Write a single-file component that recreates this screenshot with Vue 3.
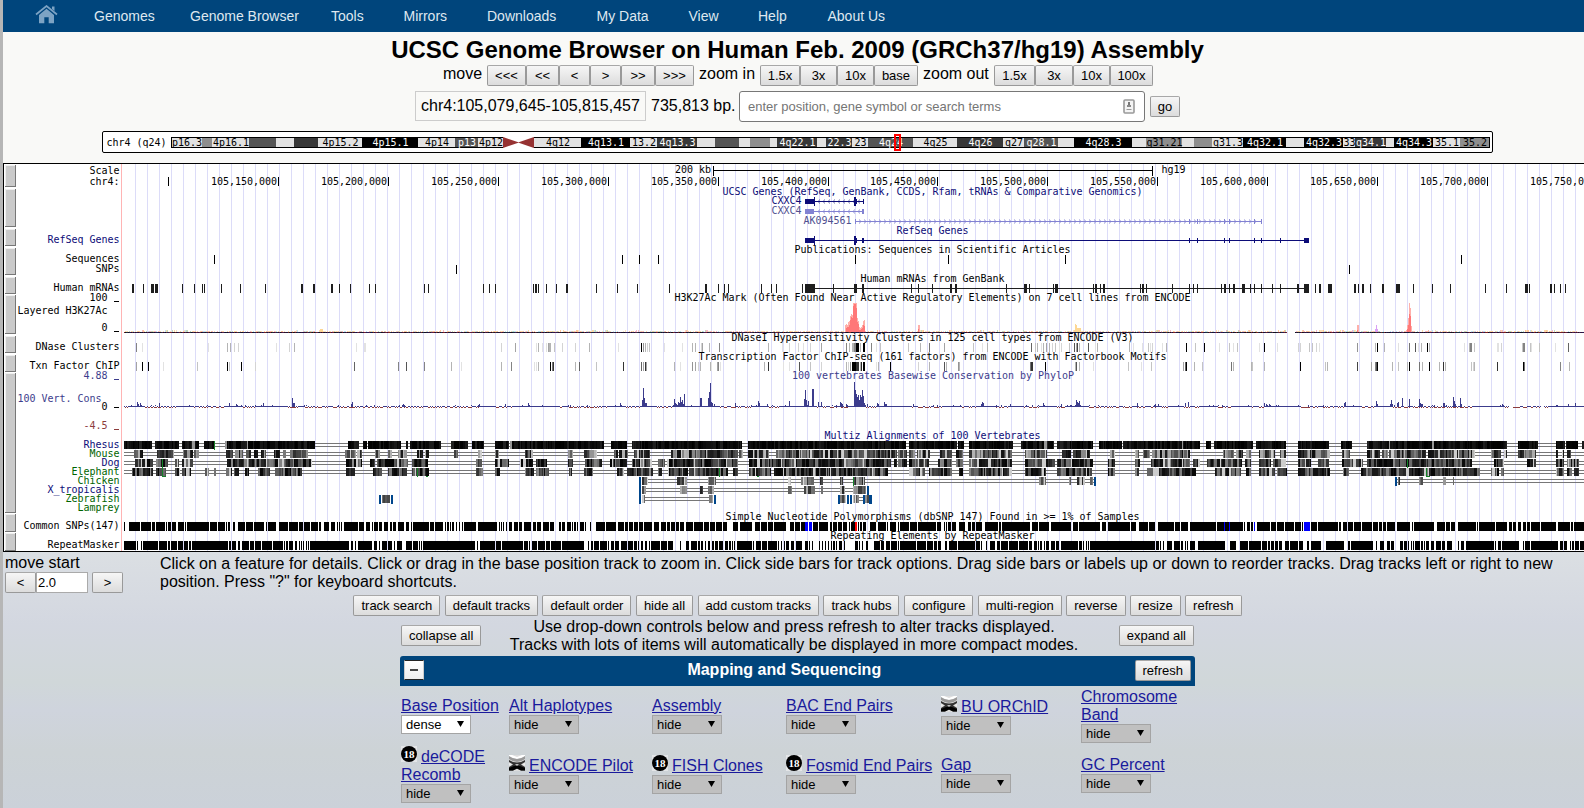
<script setup>
const nav = [
  ['Genomes', 94], ['Genome Browser', 190], ['Tools', 331], ['Mirrors', 403.5], ['Downloads', 487],
  ['My Data', 596.5], ['View', 688.5], ['Help', 758], ['About Us', 827.5],
]
const moveBtns = [['<<<', 39], ['<<', 33], ['<', 31], ['>', 31], ['>>', 34], ['>>>', 39]]
const zoomIn = [['1.5x', 40], ['3x', 37], ['10x', 37], ['base', 44]]
const zoomOut = [['1.5x', 41], ['3x', 38], ['10x', 37], ['100x', 43]]
const actions = ['track search', 'default tracks', 'default order', 'hide all', 'add custom tracks', 'track hubs', 'configure', 'multi-region', 'reverse', 'resize', 'refresh']
const controls = [
  { name: 'Base Position', mode: 'dense' }, { name: 'Alt Haplotypes' }, { name: 'Assembly' },
  { name: 'BAC End Pairs' }, { name: 'BU ORChID', icon: 'helix' }, { name: 'Chromosome Band' },
  { name: 'deCODE Recomb', icon: '18' }, { name: 'ENCODE Pilot', icon: 'helix' }, { name: 'FISH Clones', icon: '18' },
  { name: 'Fosmid End Pairs', icon: '18' }, { name: 'Gap' }, { name: 'GC Percent' },
]

/* chromosome bands: start x, shade, label */
const L = '#e2e2e2', G = '#8e8e8e', D = '#555', K = '#383838', B = '#000'
const bandData = [
  [171, L, 'p16.3'], [202, G], [212, L, '4p16.1'], [249, D], [276, L], [294, K], [318, L, '4p15.2'], [362, B, '4p15.1'],
  [418, L, '4p14'], [455, D, 'p13'], [478, L, '4p12'], [503, '#fff'], [534, L, '4q12'], [581, B, '4q13.1'], [630, L, '13.2'],
  [657, K, '4q13.3'], [697, L], [715, D], [739, L], [750, G], [770, L], [777, K, '4q22.1'], [817, L], [826, K, '22.3'],
  [852, L, '23'], [868, D, '4q24'], [913, L, '4q25'], [957, K, '4q26'], [1003, L, 'q27'], [1024, D, 'q28.1'], [1058, L],
  [1074, B, '4q28.3'], [1132, L], [1146, G, 'q31.21'], [1182, L], [1194, G], [1212, L, 'q31.3'], [1243, B, '4q32.1'],
  [1286, L], [1304, B, '4q32.3'], [1343, L, '33'], [1355, K, 'q34.1'], [1386, L], [1394, B, '4q34.3'], [1433, L, '35.1'],
  [1460, G, '35.2'], [1489, L],
]
const bands = bandData.slice(0, -1).map((b, i) => ({
  x: b[0], w: bandData[i + 1][0] - b[0], fill: b[1], t: b[2], ink: b[1] === L || b[1] === G ? '#000' : '#fff',
}))

/* Track data: four horizontal panels, coordinates in thirds of a pixel */
const OFF = [0, 400, 800, 1184]
const items = (panels) => panels.flatMap((s, i) => s.trim().split(/\s+/).filter(Boolean).map((tok) => {
  const [pos, shade] = tok.split('/')
  const [a, b] = pos.split('-').map(Number)
  const x = OFF[i] + Math.floor(a / 3 + 0.01)
  const e = b === undefined ? x + 1 : OFF[i] + Math.round(b / 3)
  const v = shade === undefined ? 0 : parseInt(shade, 16) * 16 + (shade === 'e' ? 2 : 4)
  return { x, w: Math.max(1, e - x), fill: shade === '0' || shade === undefined ? '#000' : `rgb(${v},${v},${v})` }
}))
const toPath = (list, y, h) => list.map((r) => `M${r.x} ${y}h${r.w}v${h}h${-r.w}z`).join('')
const bars = (panels, y, h) => toPath(items(panels), y, h)

const mrna = bars([
  '396-402 429 453-462 465-474 546 582 606 613 663 720 796 903-909 939-945 993-999 1018 1050 1108 1126',
  '73 85 250 268 286 400 405-411 415 439 469 498-504 589 652 712 808 915-921 955 973 985 1084 1114 1129',
  '7 15-45 100 162-171 186-192 334 354 397 450-456 465-471 619 672-681 688 759 765-774 879 885-891 900 909-915 1020 1026-1032 1038 1117',
  '16 28 40 111 120-126 136 147-153 174-183 199 210 232 265 289 339-345 360-375 394 405-411 432-444 510-516 523 534-540 559 594-600 636-648 688 745 799 904 967 1023-1032 1036 1098-1104 1111 1129 1144',
], 284, 9)
const pubSeq = bars(['643', '667 718 775', '166 445 796', '832'], 255, 9)
const pubSnp = bars(['', '169', '', '496'], 265, 9)

const dnase = items([
  '409/8 427/e 625/e 682/b 691/b 703/d 715/d 829/e 868/d 883/b 1069/e 1092-1098/e',
  '304/d 346/a 409/e 415/b 427/e 439/e 444/a 447-453/b 463/c 487/d 526/d 568/b 655/e 723/0 730/9 736/b 742/d 748/c 793/e 847/e 877/b 886/b 904/d 907/a 928/b 958/8 1105/b 1147/e 1168/d 1195/d',
  '10/e 31/d 65/a 139/8 148/b 157-162/b 163-168/8 169-177/0 181/b 189-195/0 214/8 228/e 240/c 325/c 361/b 388/7 433/a 520/c 547/e 562/b 694/6 706/c 712/b 724/e 730/b 739/a 748/b 757/d 766/c 778/e 784/d 808/c 822/5 828/a 831/4 838/b 865/5 886/e 892/b 988/b 1000/e 1027/e 1045/c 1051/e 1057/d 1087/e 1099/b 1159/0 1186/d',
  '34/c 61/0 106/e 136/c 148/e 160/c 226/e 241/0 280/e 343/d 349/d 376/c 385/c 397/d 406/e 520/9 574/b 580/0 601/b 643/e 676/7 694/5 703/e 712/b 730/0 736/b 841/e 855/b 858-864/8 871/c 939-945/e 952/d 1015/c 1018-1023/8 1038/c 1041/e 1066/c 1114/e 1153/6',
])
const txn = items([
  '409/a 427/0 445/0 490/e 592/c 682/0 688/c 724/0 766/d 1063/6 1195/8',
  '19/5 73/8 154/b 184/e 304/b 334/8 403/e 409/e 415/b 451/0 457/7 460/3 526/b 538/6 589/c 670/3 724/6 729/a 735/3 739/a 823/b 841/e 877/9 886/a 895/d 900/b 931/b 935/e 951/a 955/8 961/e 1093/b 1105/3 1150/e 1168/e 1198/5',
  '31/c 64/d 139/b 145/d 150/9 156-168/0 169/3 172-176/3 180/b 184/2 190-195/0 229/e 235/b 271/0 355/d 388/b 433/5 439/b 475/9 478/b 691/7 694-699/3 736/0 826/b 829/5 837/b 880/e 985/c 1024/e 1054/c 1150/a 1156/6 1159/0 1183/c',
  '31/b 55/c 142/7 148/b 202/b 205/c 241/b 349/0 424/c 430/b 520/4 562/a 574/8 577/5 580/0 625/b 643/c 670/b 676/0 706/7 715/b 736/0 766/b 778/3 784/b 862/c 868/d 871/b 940/3 1018/0 1021/7 1129/8 1156/b',
])

const rnd = (n) => {
  let h = Math.imul(n ^ 0x9e3779b9, 0x85ebca6b)
  h ^= h >>> 13
  h = Math.imul(h, 0xc2b2ae35)
  h ^= h >>> 16
  return (h >>> 0) / 4294967296
}

/* Conservation wiggle: position/top of each spike */
const spikeSrc = [
  '394/735 412/727 415/733 421/731 424/735 478/731 568/735 688/729 709/732 712/735 766/735 790/729 877/714 880/730 883/731 1054/734 1057/726',
  '7/735 10/733 13/735 235/735 238/733 316/732 385/731 388/735 510/735 563/735 661/731 664/735 727/720 730/684 733/714 736/731 739/729 820/735 823/718 826/730 829/733 832/735 835/726 838/730 841/712 844/727 847/722 850/733 853/703 874/735 901/714 904/714 925/716 928/697 931/669 934/727 937/730 943/733 1006/729 1054/735 1075/723 1078/730 1103/732 1156/735 1168/723',
  '12/718 15/690 18/720 25/724 37/687 40/687 55/726 64/726 109/735 121/726 124/729 127/733 139/732 142/735 163/666 166/690 169/702 172/712 175/706 178/720 181/705 184/711 187/690 190/708 193/730 196/736 202/733 232/729 235/732 253/726 256/732 259/733 340/733 412/735 481/735 544/732 547/726 550/729 589/735 604/735 631/732 730/729 733/735 784/734 825/735 828/720 831/727 834/730 837/724 841/735 1012/730 1063/735 1066/734 1075/732 1135/735 1156/733 1165/726',
  '4/731 13/726 75/735 88/735 115/735 193/735 241/729 247/732 250/735 256/732 259/735 343/735 373/735 418/735 481/730 484/728 508/735 577/723 580/733 619/733 622/720 625/733 631/735 640/731 643/728 655/714 676/717 706/717 709/730 712/733 715/732 751/735 778/730 781/730 787/735 808/711 811/725 814/733 829/714 832/733 955/734 1117/735 1120/735 1153/734 1174/731',
]
const spikes = spikeSrc.flatMap((s, i) => s.split(' ').map((t) => {
  const [p, top] = t.split('/').map(Number)
  const y = 160 + Math.floor(top / 3)
  return `M${OFF[i] + Math.floor(p / 3)} ${y}h1V407h-1z`
})).join('')
const wig = { up: '', down: '' }
for (let x = 124; x < 1584; x++) {
  if ((x > 1508 && x < 1513) || (x > 1540 && x < 1544)) continue
  const calm = rnd((x >> 4) + 7) < 0.45
  if (calm || rnd(x * 3 + 1) > 0.45) wig.up += `M${x} 406h1v1h-1z`
  else wig.down += `M${x} 407h1v1h-1z`
  if (rnd(x * 5 + 11) > 0.97) wig.up += `M${x} 405h1v1h-1z`
}

/* Layered H3K27Ac noise floor */
const tints = ['#fdd9a4', '#fbe3bd', '#ffc69b', '#bfe3f2', '#f5b8c4', '#c3d9b8', '#fbdca8']
const darks = ['#201428', '#3a1030', '#151540', '#54204a', '#14131c', '#7a2020', '#1b3040', '#2a1a50']
const hist = []
for (let x = 124; x < 1584; x++) {
  if (x > 1286 && x < 1295) continue
  hist.push({ x, y: 332, h: 1, fill: darks[Math.floor(rnd(x * 7) * 8)] })
  if (rnd(x * 13 + 5) < 0.62) {
    const h = rnd((x >> 2) * 31) > 0.85 ? 2 : 1
    hist.push({ x, y: 332 - h, h, fill: tints[Math.floor(rnd(x * 11) * 7)] })
  }
}
/* Signal peaks as [x, top] columns */
const cols = (list) => list.map(([x, y]) => `M${x} ${y}h1V332h-1z`).join('')
const peakLight = cols([[845, 325], [846, 324], [847, 325], [848, 322], [849, 321], [850, 316], [851, 314], [852, 315], [853, 303], [854, 303], [855, 303], [856, 303], [857, 318], [858, 321], [859, 327], [860, 328], [861, 327], [862, 325], [863, 321], [864, 320], [865, 331], [918, 325], [919, 325], [1357, 325], [1358, 325], [1408, 318], [1409, 303], [1410, 308], [1411, 326], [1407, 325], [1406, 330], [1426, 331], [1428, 330], [1430, 331]])
const peakDeep = cols([[846, 328], [847, 327], [848, 327], [849, 325], [850, 320], [851, 317], [852, 318], [853, 306], [854, 304], [855, 304], [856, 308], [857, 322], [858, 324], [859, 330], [860, 330], [861, 329], [862, 328], [863, 325], [864, 326], [918, 329], [1357, 330], [1408, 325], [1409, 314], [1410, 316], [1407, 329]])

/* Multiz alignments */
const alnSrc = [
  { y: 441, lo: 0, hi: 36, p: ['372-456 465-537 546-597 612-642 675-945 1044-1077 1089-1101 1104-1200', '0-4 18-24 30-123 153-204 216-252 285-327 330-612 633-681 696-1026 1044-1200', '0-318 327-471 474-492 507-639 663-762 771-879 897-966 969-1152', '0-48 66-81 90-207 216-306 342-435 471-504 549-969 1002-1062 1116-1143 1146-1182 1194-1200'] },
  { y: 450, lo: 15, hi: 190, p: ['402-429 471-522 549-579 583-597 678-699 705-729 738-753 762-774 783-798 822-840 850-858 870-924 1035-1068 1071-1086 1125-1140 1164-1176 1194-1200', '0-21 51-69 75-87 162-174 234-246 285-297 375-399 504-519 552-591 642-654 657-684 702-750 813-1014 1017-1029 1044-1108 1128-1200', '0-228 228-291 294-321 327-345 351-390 420-456 468-489 507-636 675-741 786-813 819-870 930-945 1005-1017 1029-1050 1056-1152', '0-18 117-150 156-177 186-201 225-273 288-306 342-438 474-498 549-588 594-612 615-726 732-873 921-951 960-969 1002-1056 1116-1122 1134-1140 1149-1161'] },
  { y: 459, lo: 5, hi: 140, p: ['405-459 468-504 525-537 546-579 681-936 1038-1086 1110-1125 1131-1200', '0-24 36-84 228-246 285-327 360-399 408-441 504-519 555-606 630-681 696-756 774-795 801-1014 1047-1200', '0-273 282-291 294-321 327-387 414-456 468-489 507-636 675-765 771-879 924-945 1005-1020 1053-1152', '0-18 27-48 69-174 183-201 225-261 267-306 342-381 402-435 474-537 549-864 930-960 1029-1056 1116-1140 1149-1185'] },
  { y: 468, lo: 5, hi: 145, p: ['396-459 468-498 525-540 546-573 615-627 642-648 678-696 702-717 735-747 774-810 825-906 1038-1065 1119-1146 1164-1200', '0-21 36-87 228-249 285-300 375-402 408-447 507-516 552-579 651-672 681-759 774-786 804-864 867-984 999-1014 1047-1113 1122-1200', '0-264 327-375 387-456 477-489 507-636 675-738 771-876 924-945 1005-1017 1041-1152', '0-36 93-171 186-201 225-273 279-309 342-438 477-495 531-888 921-945 951-960 1116-1140 1149-1164 1170-1185'] },
  { y: 477, lo: 40, hi: 225, p: ['', '726-744 831-861 925-948 1164-1173', '5-42 60-69 120-129 160-195 717-738 807-813 833-855 870-879', '642-648 705-717 777-787 807-810'] },
  { y: 486, lo: 35, hi: 185, p: ['', '726-738 840-861 900-909 925-942 1164-1176', '12-45 63-69 120-135 159-198', ''] },
  { y: 495, lo: 60, hi: 225, p: ['1146-1170', '726-735 927-939', '120-138 159-177 195-207', ''] },
]
const cells = []
alnSrc.forEach((row, r) => {
  items(row.p).forEach((b) => {
    let x = b.x
    while (x < b.x + b.w) {
      const n = x * 17 + r * 7919
      const w = Math.min(b.x + b.w - x, 1 + Math.floor(rnd(n) * 2.4))
      const k = Math.pow(rnd(n + 3), r === 0 ? 2 : r < 4 ? 1.5 : 1)
      let v = row.lo + (row.hi - row.lo) * k
      if (r > 0 && r < 4 && rnd(n + 8) > 0.94) v = 205
      if (r === 0 && rnd(n + 8) > 0.985) v = 150
      v = Math.round(v)
      cells.push({ x, y: row.y, w, fill: `rgb(${v},${v},${v})` })
      x += w
    }
  })
})
const gapLines = [
  [124, 1584, 441], [124, 1584, 450], [124, 1584, 459], [124, 1584, 468], [642, 1094, 477], [1396, 1584, 477],
  [642, 864, 486], [642, 712, 495], [858, 864, 495],
]
const inserts = [[639, 477, 2, 27], [714, 495, 2, 9], [1094, 477, 2, 9], [867, 486, 2, 9], [379, 495, 2, 9], [391, 495, 2, 9], [838, 495, 2, 9], [847, 495, 2, 9], [850, 495, 2, 9], [863, 495, 2, 9], [869, 495, 3, 9], [1395, 477, 2, 9]]
const greens = [[214, 441, 1, 9], [162, 459, 1, 18], [162, 476, 4, 1], [417, 468, 1, 9], [426, 476, 2, 1], [719, 468, 1, 9], [757, 476, 2, 1], [853, 477, 1, 9], [1407, 459, 1, 9], [1426, 468, 1, 9], [1426, 476, 4, 1]]

const snps = bars([
  '372-375 387-420 423-453 456-465 468-495 498-501 504-514 517-528 534-552 555-558 561-627 630-651 654-675 678-681 684-690 699-705 714-735 738-759 762-792 798-801 804-828 837-864 867-894 897-909 912-930 933-954 957-963 972-987 993-1005 1011-1014 1017-1020 1023-1026 1032-1074 1077-1092 1098-1110 1116-1119 1122-1134 1137-1146 1152-1164 1170-1176 1179-1188 1194-1200',
  '0-12 18-27 33-36 39-87 90-102 105-129 135-138 141-147 150-153 156-162 168-171 177-180 186-189 192-228 234-291 297-300 303-306 309-312 318-321 327-336 342-354 357-366 372-393 399-408 411-423 429-447 450-462 477-483 486-495 501-513 516-519 522-528 531-534 540-552 555-558 570-573 588-615 618-648 654-672 675-684 687-699 702-714 717-729 732-756 762-777 783-798 801-810 813-825 828-837 840-852 858-879 882-909 912-927 930-945 948-966 969-981 999-1014 1020-1056 1065-1080 1083-1101 1104-1119 1122-1158 1170-1182 1185-1200',
  '3-15 39-54 57-84 90-96 99-111 114-126 129-141 147-150 153-165 174-177 180-186 189-198 210-228 234-258 261-264 270-288 294-297 300-327 330-351 354-408 411-423 432-435 438-441 444-453 456-468 477-495 504-513 516-525 528-546 555-594 597-603 606-690 696-714 717-747 753-813 819-834 837-900 906-918 924-990 993-1008 1017-1044 1047-1065 1074-1122 1125-1140 1143-1152',
  '0-12 18-96 99-177 180-183 189-198 201-207 219-258 261-276 279-300 303-330 333-351 354-357 381-399 402-462 465-471 477-489 492-507 510-531 534-564 567-582 585-594 597-606 609-633 639-678 684-687 690-750 759-783 786-798 801-813 822-876 879-882 885-933 936-969 975-984 987-996 1002-1011 1017-1026 1029-1038 1041-1068 1071-1116 1122-1158 1161-1167 1170-1200',
], 522, 9)
const snpBlue = bars(['', '', '15-24 27-36', '120-124 135-138 210-214 360-378'], 522, 9)
const rmsk = bars([
  '372-408 412-415 423-426 429-474 477-501 504-510 513-531 534-549 552-564 567-573 576-684 687-693 696-708 714-720 726-747 750-762 765-783 786-816 819-849 852-855 858-864 867-879 885-891 897-900 903-906 909-912 918-921 924-927 930-1047 1053-1059 1065-1068 1074-1116 1122-1131 1137-1140 1146-1161 1164-1176 1182-1185 1191-1200',
  '0-6 18-36 39-54 57-60 63-66 69-225 231-234 240-285 288-303 306-369 372-384 387-390 396-411 414-435 438-450 453-483 486-552 564-567 573-579 582-597 600-621 624-627 633-642 645-657 663-681 684-699 702-711 714-717 723-729 735-741 747-750 753-780 783-801 804-819 840-843 858-867 873-891 894-900 903-909 915-918 924-930 936-942 945-954 957-969 975-984 987-993 996-999 1002-1005 1011-1056 1059-1062 1068-1083 1086-1101 1104-1131 1134-1137 1143-1146 1152-1155 1158-1167 1173-1182 1188-1200',
  '0-6 15-24 27-30 36-39 57-60 66-69 75-78 84-87 93-96 99-105 108-111 117-126 132-135 165-174 177-180 186-189 198-204 222-240 243-252 258-270 273-291 294-297 300-348 351-378 381-399 402-411 414-423 435-441 447-471 474-525 528-540 543-546 558-561 570-585 591-600 603-624 627-654 657-684 687-696 702-711 714-717 720-726 732-735 738-747 753-765 768-777 783-834 837-846 849-852 858-861 864-867 870-1065 1068-1077 1080-1083 1089-1092 1101-1116 1122-1140 1143-1149',
  '3-6 9-12 18-33 42-123 138-156 168-192 195-231 234-249 252-258 261-270 273-282 285-294 303-315 318-342 345-357 369-375 381-411 426-480 492-498 501-567 576-579 588-600 609-618 621-630 648-657 660-669 672-675 681-684 687-690 693-708 711-717 720-723 726-735 741-750 756-771 774-783 789-804 822-825 831-840 846-930 933-936 942-951 954-1005 1017-1020 1023-1038 1041-1122 1128-1137 1140-1149 1158-1161 1164-1170 1173-1185 1188-1200',
], 541, 9)

const grid = Array.from({ length: 121 }, (_, i) => `M${135 + i * 12} 164h1v387h-1z`).join('')
const sideBars = [[165, 187], [189, 227], [228.5, 246], [247.5, 275], [276.5, 294], [295, 334], [335.5, 353], [354.5, 372], [373, 513], [514, 532], [533, 551]]
const ticks = [168, 278, 388, 498, 608, 718, 828, 937, 1047, 1157, 1267, 1377, 1487]
const posLabels = ['', '105,150,000', '105,200,000', '105,250,000', '105,300,000', '105,350,000', '105,400,000', '105,450,000', '105,500,000', '105,550,000', '105,600,000', '105,650,000', '105,700,000', '105,750,000']
  .map((t, i) => ({ t, x: 101 + i * 110 - (i > 6 ? 1 : 0) })).slice(1)

const navy = '#0c0c78', green = '#006400', slate = '#3c3c8c'
/* left-hand labels: text, right edge, baseline, colour */
const labels = [
  ['Scale', 119.5, 174], ['chr4:', 119.5, 185], ['RefSeq Genes', 119.5, 243, navy], ['Sequences', 119.5, 262], ['SNPs', 119.5, 272],
  ['Human mRNAs', 119.5, 291], ['100', 107.5, 301], ['Layered H3K27Ac', 107.5, 314], ['0', 107.5, 331], ['DNase Clusters', 119.5, 350],
  ['Txn Factor ChIP', 119.5, 369], ['4.88', 107.5, 379, slate], ['100 Vert. Cons', 101.5, 402, slate], ['0', 107.5, 410],
  ['-4.5', 107.5, 429, '#8c3c3c'], ['Rhesus', 119.5, 448, navy], ['Mouse', 119.5, 457, green], ['Dog', 119.5, 466, navy],
  ['Elephant', 119.5, 475, green], ['Chicken', 119.5, 484, green], ['X_tropicalis', 119.5, 493, navy], ['Zebrafish', 119.5, 502, green],
  ['Lamprey', 119.5, 511, green], ['Common SNPs(147)', 119.5, 529], ['RepeatMasker', 119.5, 548],
]
const marks = [[301, '#000'], [331, '#000'], [379, slate], [407, '#000'], [429, '#8c3c3c']]
const titles = [
  ['200 kb', 675, 173], ['hg19', 1161.5, 173],
  ['UCSC Genes (RefSeq, GenBank, CCDS, Rfam, tRNAs & Comparative Genomics)', 722.5, 195, navy],
  ['CXXC4', 771.5, 204, navy], ['CXXC4', 771.5, 214, '#505090'], ['AK094561', 803.5, 224, '#505090'],
  ['RefSeq Genes', 896.5, 234, navy], ['Publications: Sequences in Scientific Articles', 794.5, 253], ['Human mRNAs from GenBank', 860.5, 282],
  ['H3K27Ac Mark (Often Found Near Active Regulatory Elements) on 7 cell lines from ENCODE', 674.5, 301],
  ['DNaseI Hypersensitivity Clusters in 125 cell types from ENCODE (V3)', 731.5, 341],
  ['Transcription Factor ChIP-seq (161 factors) from ENCODE with Factorbook Motifs', 698.5, 360],
  ['100 vertebrates Basewise Conservation by PhyloP', 792, 379, slate],
  ['Multiz Alignments of 100 Vertebrates', 824.5, 439, navy],
  ['Simple Nucleotide Polymorphisms (dbSNP 147) Found in >= 1% of Samples', 725.5, 520],
  ['Repeating Elements by RepeatMasker', 830.5, 539],
]
const arrows = (x1, x2, y, dir) => {
  let d = ''
  for (let x = x1; x < x2; x += 5) d += dir > 0 ? `M${x} ${y - 2}h1v1h1v1h1v1h-1v1h-1v1h-1` : `M${x + 2} ${y - 2}h-1v1h-1v1h-1v1h1v1h1v1h1`
  return d
}
const exons = (list, y, h) => list.map((x) => `M${x} ${y}h1v${h}h-1z`).join('')
const exonX = [1189, 1197, 1224, 1229, 1254, 1261]
</script>

<template>
  <div class="page">
    <nav class="nav">
      <svg class="home" width="24" height="20" viewBox="0 0 24 20">
        <path d="M1 9.5 11.5 1 22 9.5" fill="none" stroke="#7da3c4" stroke-width="1.7" />
        <path d="M17 1.5h2.5v4.5L17 4z" fill="#7da3c4" />
        <path d="M11.5 3.8 19 10v8.3h-5.3v-6H9.3v6H4V10z" fill="#7da3c4" />
      </svg>
      <span v-for="n in nav" :key="n[0]" class="nav-item" :style="{ left: n[1] + 'px' }">{{ n[0] }}</span>
    </nav>

    <header class="head">
      <h1>UCSC Genome Browser on Human Feb. 2009 (GRCh37/hg19) Assembly</h1>
      <div class="move-row">
        <span class="w-move">move</span>
        <button v-for="b in moveBtns" :key="b[0]" :style="{ width: b[1] + 'px' }">{{ b[0] }}</button>
        <span class="w-in">zoom in</span>
        <button v-for="b in zoomIn" :key="b[0]" :style="{ width: b[1] + 'px' }">{{ b[0] }}</button>
        <span class="w-out">zoom out</span>
        <button v-for="b in zoomOut" :key="b[0]" :style="{ width: b[1] + 'px' }">{{ b[0] }}</button>
      </div>
      <div class="pos-row">
        <span class="pos">chr4:105,079,645-105,815,457</span>
        <span class="bp">735,813 bp.</span>
        <div class="search">
          <span>enter position, gene symbol or search terms</span>
          <svg width="12" height="15" viewBox="0 0 12 15">
            <rect x="1" y="1" width="10" height="13" rx="1" fill="#f4f4f4" stroke="#999" stroke-width="1.6" />
            <rect x="5" y="3" width="2" height="3" fill="#777" /><rect x="4" y="6" width="4" height="2" fill="#888" /><rect x="3.5" y="10" width="5" height="1" fill="#999" />
          </svg>
        </div>
        <button class="go">go</button>
      </div>
    </header>

    <svg class="ideo" width="1392" height="24" viewBox="102 132 1392 24">
      <rect x="102.5" y="133.5" width="1390" height="21" rx="1.5" fill="#fff" stroke="#000" />
      <rect x="171" y="139" width="1319" height="11" fill="#000" />
      <rect v-for="b in bands" :key="b.x" :x="b.x" y="140" :width="b.w" height="9" :fill="b.fill" />
      <rect x="503" y="139" width="31" height="11" fill="#fff" />
      <path d="M503 139 519 144.5 503 150zM534 139 518 144.5 534 150z" fill="#963232" />
      <rect x="171" y="139" width="1" height="11" />
      <g class="px" text-anchor="middle">
        <template v-for="b in bands" :key="b.x">
          <text v-if="b.t" :x="b.x + b.w / 2 + 0.5" y="148" :fill="b.ink" :textLength="b.t.length * 6" lengthAdjust="spacingAndGlyphs">{{ b.t }}</text>
        </template>
      </g>
      <text class="px" x="106.5" y="148" textLength="60">chr4 (q24)</text>
      <rect x="895" y="137" width="5" height="15" fill="none" stroke="#f00" stroke-width="2" />
    </svg>

    <svg class="tracks" width="1581" height="389" viewBox="3 163 1581 389" shape-rendering="crispEdges">
      <rect x="3" y="163" width="1590" height="389" fill="#fff" />
      <path :d="grid" fill="#dcdcf8" />
      <rect x="121" y="164" width="1" height="387" fill="#ffb4b4" />
      <g v-for="s in sideBars" :key="s[0]">
        <rect x="5" :y="s[0]" width="11" :height="s[1] - s[0]" fill="#777" />
        <rect x="5" :y="s[0]" width="10" :height="s[1] - s[0] - 1" fill="#eee" />
        <rect x="6" :y="s[0] + 1" width="9" :height="s[1] - s[0] - 2" fill="#cacaca" />
      </g>

      <path d="M713 166h1v10h-1zM1152 166h1v10h-1zM713 170h440v1H713z" />
      <path :d="exons(ticks, 177, 9)" />

      <g :fill="navy">
        <path d="M805 199h10v5h-10zM814 197h1v9h-1zM854 197h2v9h-2zM856 199h1v5h-1zM863 199h1v5h-1zM815 201h49v1h-49z" />
        <path :d="arrows(818, 862, 201, -1)" opacity=".3" />
        <path d="M805 238h10v5h-10zM814 236h1v9h-1zM854 236h2v9h-2zM856 238h1v5h-1zM862 238h2v5h-2zM805 240h504v1H805zM1304 238h5v5h-5z" />
        <path :d="exons([...exonX, 1280], 238, 5)" />
      </g>
      <g fill="#8282d2">
        <path d="M805 209h9v5h-9zM862 209h2v5h-2zM814 211h50v1h-50z" />
        <path :d="arrows(818, 862, 211, -1)" opacity=".45" />
        <path d="M855 221h407v1H855z" />
        <path :d="arrows(859, 1258, 221, 1)" opacity=".45" />
        <path :d="exons([855, ...exonX], 219, 5)" />
      </g>

      <path :d="pubSeq" /><path :d="pubSnp" />
      <g fill="#1e1e1e"><path :d="mrna" /><path d="M814 288h492v1H814z" /></g>

      <rect v-for="(h, i) in hist" :key="'h' + i" :x="h.x" :y="h.y" width="1" :height="h.h" :fill="h.fill" />
      <path d="M1075 324h1v8h-1zM1076 325h1v7h-1zM1077 328h4v4h-4zM1074 330h1v2h-1zM320 329h3v3h-3z" fill="#fdd795" />
      <path d="M1376 325h1v7h-1zM1375 329h3v3h-3z" fill="#d9a0f5" />
      <path :d="peakLight" fill="#ffb0aa" /><path :d="peakDeep" fill="#ff7878" />

      <rect v-for="(r, i) in dnase" :key="'d' + i" :x="r.x" y="343" :width="r.w" height="9" :fill="r.fill" />
      <rect v-for="(r, i) in txn" :key="'t' + i" :x="r.x" y="362" :width="r.w" height="9" :fill="r.fill" />

      <path :d="wig.up + spikes" :fill="slate" /><path :d="wig.down" fill="#8c3c3c" />

      <g fill="#777">
        <template v-for="(g, i) in gapLines" :key="'g' + i">
          <rect :x="g[0]" :y="g[2] + 2" :width="g[1] - g[0]" height="1" /><rect :x="g[0]" :y="g[2] + 5" :width="g[1] - g[0]" height="1" />
        </template>
      </g>
      <rect v-for="(c, i) in cells" :key="'c' + i" :x="c.x" :y="c.y" :width="c.w" height="8" :fill="c.fill" />
      <rect v-for="(c, i) in inserts" :key="'i' + i" :x="c[0]" :y="c[1]" :width="c[2]" :height="c[3]" fill="#00468c" />
      <rect v-for="(c, i) in greens" :key="'n' + i" :x="c[0]" :y="c[1]" :width="c[2]" :height="c[3]" fill="#148228" />

      <path :d="snps" /><path :d="snpBlue" fill="#00f" /><rect x="855" y="522" width="2" height="9" fill="#f00" />
      <path :d="rmsk" />

      <g class="px">
        <text v-for="(l, i) in labels" :key="'l' + i" :x="l[1] - l[0].length * 6" :y="l[2]" :fill="l[3] || '#000'" :textLength="l[0].length * 6">{{ l[0] }}</text>
        <text v-for="(l, i) in titles" :key="'T' + i" :x="l[1]" :y="l[2]" :fill="l[3] || '#000'" :textLength="l[0].length * 6">{{ l[0] }}</text>
        <text v-for="l in posLabels" :key="l.t" :x="l.x" y="185" textLength="66">{{ l.t }}</text>
      </g>
      <rect v-for="m in marks" :key="m[0]" x="114" :y="m[0]" width="5" height="1" :fill="m[1]" />
      <path d="M3 163H1584v1H3zM3 551H1584v1H3zM3 163h1v389H3z" />
    </svg>

    <section class="below">
      <div class="guide">
        <div class="mover">
          <div>move start</div>
          <div class="mover-row"><button>&lt;</button><span class="num">2.0</span><button class="fwd">&gt;</button></div>
        </div>
        <p>Click on a feature for details. Click or drag in the base position track to zoom in. Click side bars for track options. Drag side bars or labels up or down to reorder tracks. Drag tracks left or right to new<br>position. Press "?" for keyboard shortcuts.</p>
      </div>
      <div class="actions"><button v-for="a in actions" :key="a">{{ a }}</button></div>
      <div class="hint">
        <button>collapse all</button>
        <p>Use drop-down controls below and press refresh to alter tracks displayed.<br>Tracks with lots of items will automatically be displayed in more compact modes.</p>
        <button>expand all</button>
      </div>
      <div class="group">
        <span class="minus"><i></i></span><b>Mapping and Sequencing</b><button>refresh</button>
      </div>
      <div class="controls">
        <div v-for="c in controls" :key="c.name" class="ctl">
          <div class="name">
            <svg v-if="c.icon === '18'" width="16" height="16" viewBox="0 0 16 16">
              <rect width="16" height="16" fill="#e4e6e8" /><circle cx="8" cy="8" r="8" fill="#000" />
              <text x="8" y="12" text-anchor="middle" class="i18" textLength="11">18</text>
            </svg>
            <svg v-else-if="c.icon" width="16" height="16" viewBox="0 0 16 16">
              <rect width="16" height="16" fill="#dedede" /><path d="M0 0h3l5 2 5-2h3v2L8 4 0 2z" fill="#fff" />
              <path d="M0 1q4 3 8 3t8-3v3q-4 3-8 3T0 4z" fill="#999" />
              <path d="M0 5q8 5 16 0v2l-4 2.500 4 2.500v3.500h-4l-4-2-4 2H0V12l4-2.500L0 7z" fill="#333" />
              <path d="M6 9.200h4l-2 1.500zM0 10.500l2-1L0 8zM16 10.500l-2-1 2-1.500z" fill="#eee" /><path d="M0 13 5 11h6l5 2v2.500h-4l-4-2-4 2H0z" fill="#000" />
            </svg><a>{{ c.name }}</a>
          </div>
          <span class="sel" :class="{ on: c.mode }">{{ c.mode || 'hide' }}<svg width="7" height="6" viewBox="0 0 7 6"><path d="M0 0h7L3.500 6z" /></svg></span>
        </div>
      </div>
    </section>
  </div>
</template>

<style>
html, body { overflow: hidden; background: #f9f9f7; }
</style>

<style scoped>
.page {
  box-sizing: border-box; width: 1592px; height: 808px; overflow: hidden; background: #f9f9f7;
  border-left: 3px solid; border-image: linear-gradient(to right, #b6b6b6 0 33%, #8f8f8f 33% 66%, #e8e8e8 66%) 1 / 0 0 0 3px;
  font: 16px/18px "Liberation Sans", Arial, sans-serif; color: #000; display: flex; flex-direction: column;
}
button {
  box-sizing: border-box; height: 21px; margin: 0; padding: 0 7px; border: 1px solid #999; border-top-color: #a8a8a8; border-radius: 2px;
  background: linear-gradient(#f6f6f6, #dcdcdc); font: 13px/19px "Liberation Sans", Arial, sans-serif; color: #000; flex: none; white-space: nowrap;
}
.nav { position: relative; height: 32px; flex: none; background: #00457c; color: #dfe8f0; font-size: 14px; }
.home { position: absolute; left: 32px; top: 5px; }
.nav-item { position: absolute; top: 7px; margin-left: -3px; white-space: nowrap; }
.head { height: 98px; flex: none; }
h1 { margin: 4px 0 0; font-size: 24px; line-height: 28px; text-align: center; white-space: nowrap; }
.move-row { display: flex; margin: 1px 0 0 440px; align-items: center; height: 21px; }
.move-row span { flex: none; position: relative; top: -2px; }
.move-row button { padding: 0; }
.w-move { width: 44px; }
.w-in { width: 61px; padding-left: 5px; }
.w-out { width: 71px; padding-left: 5px; }
.pos-row { display: flex; align-items: center; margin: 5px 0 0 412px; height: 31px; }
.pos { box-sizing: border-box; width: 231px; height: 30px; border: 1px solid #ccc; padding: 5px; line-height: 18px; position: relative; top: -1px; }
.bp { width: 88px; padding-left: 5px; box-sizing: border-box; white-space: nowrap; position: relative; top: -1px; }
.search { box-sizing: border-box; width: 406px; height: 31px; margin-left: 5px; margin-right: 5px; border: 1px solid #777; border-radius: 3px; background: #fff; display: flex; align-items: center; justify-content: space-between; padding: 0 9px 0 8px; font-size: 13px; color: #757575; }
.search svg { margin-top: -1px; }
.go { width: 30px; padding: 0; }
.ideo { margin-left: 99px; flex: none; display: block; }
.tracks { margin-top: 9px; flex: none; display: block; }
.px { font: 10px "DejaVu Sans Mono", monospace; }
.below { flex: 1; background: linear-gradient(#dbdfe3 0, #d3d7e0 73px, #d0d7d9 130px, #cfd4dd 158px, #cdd3d6 200px, #cbd1d9 256px); }
.guide { display: flex; height: 43px; }
.mover { width: 157px; padding-left: 2px; box-sizing: border-box; }
.mover > div:first-child { padding-top: 2px; line-height: 18px; }
.mover-row { display: flex; }
.mover-row button { width: 31px; padding: 0; }
.mover-row .fwd { margin-left: 4px; }
.num { box-sizing: border-box; width: 52px; height: 21px; background: #fff; border: 1px solid #aaa; font-size: 13px; line-height: 19px; padding-left: 1px; }
.guide p { margin: 3px 0 0; white-space: nowrap; }
.actions { display: flex; justify-content: center; gap: 4.45px; }
.hint { box-sizing: border-box; width: 793px; margin: 0 0 0 398px; display: flex; justify-content: space-between; align-items: center; text-align: center; height: 40px; padding-bottom: 1px; }
.hint p { margin: 0; white-space: nowrap; position: relative; left: -6px; }
.group { box-sizing: border-box; width: 795px; height: 30px; margin-left: 397px; background: #00457c; border-radius: 3px 3px 0 0; display: flex; align-items: center; justify-content: space-between; color: #fff; padding: 0 4px 2px; }
.group b { margin-left: 10px; margin-top: -1px; }
.minus { width: 20px; height: 20px; box-sizing: border-box; background: linear-gradient(#fff, #eee); border: 1px solid #222; border-left-color: #ccc; border-right-color: #ccc; display: flex; align-items: center; justify-content: center; }
.minus i { width: 8px; height: 2px; background: #444; }
.controls { display: grid; grid-template-columns: 108px 143px 134px 155px 140px 114px; grid-auto-rows: 59px; margin: 0 0 0 398px; align-items: center; }
.name a { color: #1a1a9c; text-decoration: underline; }
.name { line-height: 18px; }
.ctl:nth-child(1), .ctl:nth-child(7) { width: 100px; }
.ctl:nth-child(6), .ctl:nth-child(12) { width: 100px; }
.name svg { margin-right: 4px; vertical-align: 0; }
.i18 { font: bold 11px "Liberation Serif", serif; fill: #fff; }
.sel { box-sizing: border-box; width: 70px; height: 19px; border: 1px solid #a4a4a4; background: #c0c0c0; display: flex; align-items: center; justify-content: space-between; padding: 0 6px 0 4px; font-size: 13px; line-height: 17px; }
.sel.on { background: #fff; }
.sel svg { margin-top: -2px; }
</style>
